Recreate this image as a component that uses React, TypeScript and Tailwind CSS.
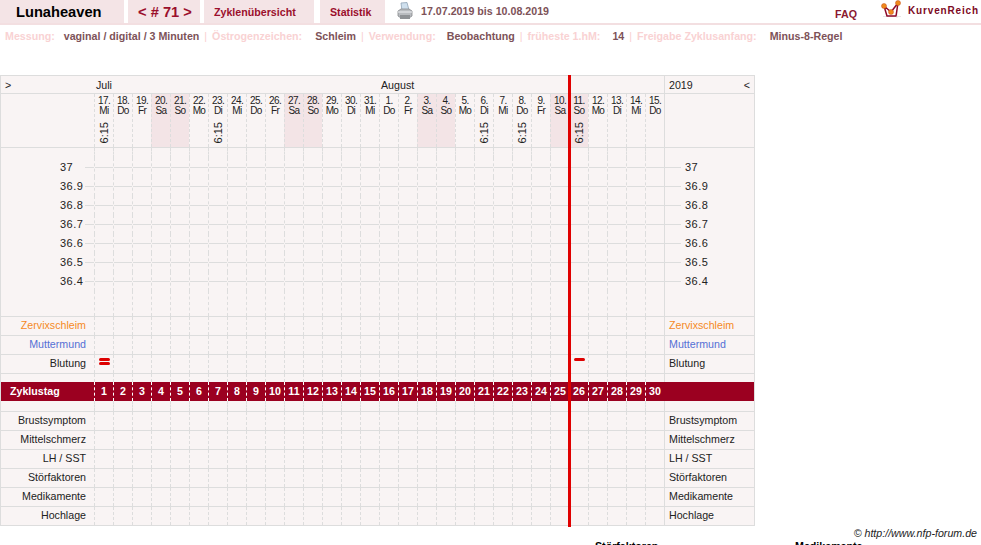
const days: [number, string][] = [
  [17, "Mi"], [18, "Do"], [19, "Fr"], [20, "Sa"], [21, "So"], [22, "Mo"], [23, "Di"], [24, "Mi"], [25, "Do"], [26, "Fr"],
  [27, "Sa"], [28, "So"], [29, "Mo"], [30, "Di"], [31, "Mi"], [1, "Do"], [2, "Fr"], [3, "Sa"], [4, "So"], [5, "Mo"],
  [6, "Di"], [7, "Mi"], [8, "Do"], [9, "Fr"], [10, "Sa"], [11, "So"], [12, "Mo"], [13, "Di"], [14, "Mi"], [15, "Do"],
];
const timed = [0, 6, 20, 22, 25];
const temps = ["37", "36.9", "36.8", "36.7", "36.6", "36.5", "36.4"];
const idx = days.map((_, i) => i);

function Cells({ line = false }: { line?: boolean }) {
  return (
    <div className="flex">
      {idx.map((i) => (
        <div key={i} className="w-[19px] flex items-center border-l border-dashed border-[#dddddd]">
          {line && <div className="h-px w-full bg-[#dddddd]" />}
        </div>
      ))}
    </div>
  );
}

function LabelRow({ label, color = "text-[#222222]", bleed = false }: { label: string; color?: string; bleed?: boolean }) {
  return (
    <div className="flex h-[19px] border-b border-[#dddddd]">
      <div className={`w-[93px] text-right pr-[8px] leading-[16px] ${color}`}>{label}</div>
      <div className="flex">
        {idx.map((i) => (
          <div key={i} className="w-[19px] flex flex-col items-center gap-px pt-[3px] border-l border-dashed border-[#dddddd]">
            {bleed && i === 0 && (
              <>
                <div className="h-[3px] w-[11px] rounded-full bg-[#dd0000]" />
                <div className="h-[3px] w-[11px] rounded-full bg-[#dd0000]" />
              </>
            )}
            {bleed && i === 25 && <div className="h-[3px] w-[11px] rounded-full bg-[#dd0000]" />}
          </div>
        ))}
      </div>
      <div className={`w-[90px] border-l border-[#dddddd] pl-[4px] leading-[16px] ${color}`}>{label}</div>
    </div>
  );
}

function Spacer({ h, border = false }: { h: string; border?: boolean }) {
  return (
    <div className={`flex ${h} ${border ? "border-b border-[#dddddd]" : ""}`}>
      <div className="w-[93px]" />
      <Cells />
      <div className="w-[90px] border-l border-[#dddddd]" />
    </div>
  );
}

function Printer() {
  return (
    <svg width="16" height="18" viewBox="0 0 16 18" className="ml-[12px]">
      <path d="M4 1 L10 0.5 L12 8 L5 9 Z" fill="#cfe0ee" stroke="#8fa3b5" strokeWidth="0.8" />
      <path d="M1 9 L4 7 H12 L15 9 V14 L12 16 H4 L1 14 Z" fill="#b9bcc0" stroke="#85888c" strokeWidth="0.8" />
      <path d="M1 10 H15" stroke="#e5e7e9" strokeWidth="1.2" />
      <path d="M3 13 H13 V17 H3 Z" fill="#8f9296" />
    </svg>
  );
}

function Logo() {
  return (
    <svg width="21" height="20" viewBox="0 0 21 20" className="shrink-0">
      <path d="M2 16.5 H20 M16 18 V6" stroke="#e6e6e6" strokeWidth="1" fill="none" />
      <path d="M3 6 L6 16 H15 L17 3 L10 12 Z" fill="#ffffff" stroke="#8d0a2a" strokeWidth="1.5" strokeLinejoin="round" />
      <circle cx="3" cy="6" r="2.5" fill="#f08a1c" stroke="#c4501c" strokeWidth="0.5" />
      <circle cx="17" cy="3" r="2.5" fill="#f08a1c" stroke="#c4501c" strokeWidth="0.5" />
      <circle cx="10" cy="12" r="2.5" fill="#f08a1c" stroke="#c4501c" strokeWidth="0.5" />
    </svg>
  );
}

function Info({ k, v, vml, sep = true }: { k: string; v: string; vml: string; sep?: boolean }) {
  return (
    <>
      {sep && <span className="ml-[5px] mr-[5px] text-[#f9cfd0] font-normal">|</span>}
      <span className="text-[#f9d2d3]">{k}</span>
      <span className={`${vml} text-[#7d5258]`}>{v}</span>
    </>
  );
}

export default function App() {
  return (
    <div className="relative w-[981px] h-[545px] overflow-hidden bg-white text-[10.67px] font-['Liberation_Sans',Arial,sans-serif]">
      {/* top bar */}
      <div className="flex items-stretch h-[25px] border-b-2 border-[#f3dfe1]">
        <div className="w-[124px] bg-[#f4e4e6] pl-[16px] text-[14.67px] font-bold text-black leading-[25px]">Lunaheaven</div>
        <div className="ml-[4px] w-[72px] bg-[#f4e4e6] pl-[2px] text-center text-[14.67px] font-bold text-[#9b0f2c] leading-[25px]">&lt; # 71 &gt;</div>
        <div className="ml-[4px] w-[110px] bg-[#f4e4e6] pl-[10px] font-bold text-[#9b0f2c] leading-[24px]">Zyklenübersicht</div>
        <div className="ml-[6px] w-[65px] bg-[#f4e4e6] pl-[10px] font-bold text-[#9b0f2c] leading-[24px]">Statistik</div>
        <div className="flex items-center pb-[2px]">
          <Printer />
          <span className="ml-[8px] font-bold text-[#7d5258]">17.07.2019 bis 10.08.2019</span>
        </div>
        <span className="ml-auto mr-[24px] mt-[6px] font-bold text-[#8b1a30]">FAQ</span>
        <div className="flex mr-[2px] pl-0">
          <Logo />
          <span className="ml-[6px] mt-[3px] text-[10px] font-bold tracking-[0.85px] text-[#7d0a25]">KurvenReich</span>
        </div>
      </div>

      {/* info line */}
      <div className="flex h-[50px] pt-[5px] pl-[5px] font-bold leading-[13px] whitespace-nowrap">
        <Info sep={false} k="Messung:" vml="ml-[9px]" v="vaginal / digital / 3 Minuten" />
        <Info k="Östrogenzeichen:" vml="ml-[13px]" v="Schleim" />
        <Info k="Verwendung:" vml="ml-[11px]" v="Beobachtung" />
        <Info k="früheste 1.hM:" vml="ml-[12px]" v="14" />
        <Info k="Freigabe Zyklusanfang:" vml="ml-[13px]" v="Minus-8-Regel" />
      </div>

      {/* chart table */}
      <div className="relative w-[755px] border-x border-t border-[#dddddd] bg-[#f9f4f4] text-[#222222]">
        <div className="flex h-[18px] border-b border-[#dddddd] leading-[19px]">
          <div className="w-[93px] pl-[4px]">&gt;</div>
          <div className="w-[287px] pl-[2px]">Juli</div>
          <div className="w-[283px]">August</div>
          <div className="w-[90px] border-l border-[#dddddd] pl-[4px] pr-[4px] flex justify-between">
            <span>2019</span>
            <span>&lt;</span>
          </div>
        </div>

        <div className="flex h-[54px] border-b border-[#dddddd]">
          <div className="w-[93px]" />
          <div className="flex">
            {days.map(([d, w], i) => (
              <div
                key={i}
                className={`w-[19px] border-l border-dashed border-[#dddddd] flex flex-col items-center pt-[2px] text-[10px] leading-[10px] tracking-[-0.6px] ${
                  w === "Sa" || w === "So" ? "bg-[#f3e4e6]" : ""
                }`}
              >
                <span>{d}.</span>
                <span>{w}</span>
                {timed.includes(i) && (
                  <span className="mt-[6px] [writing-mode:vertical-rl] rotate-180 text-[11px] leading-[12px] tracking-normal">6:15</span>
                )}
              </div>
            ))}
          </div>
          <div className="w-[90px] border-l border-[#dddddd]" />
        </div>

        <Spacer h="h-[10px]" />
        {temps.map((t) => (
          <div key={t} className="flex h-[19px] leading-[19px] text-[11px] tracking-[0.5px]">
            <div className="w-[93px] flex items-center">
              <span className="ml-[59px] w-[25px]">{t}</span>
              <div className="h-px flex-1 bg-[#dddddd]" />
            </div>
            <Cells line />
            <div className="w-[90px] border-l border-[#dddddd] flex items-center">
              <div className="h-px w-[16px] bg-[#dddddd]" />
              <span className="ml-[4px]">{t}</span>
            </div>
          </div>
        ))}
        <Spacer h="h-[26px]" border />

        <LabelRow label="Zervixschleim" color="text-[#f58a1f]" />
        <LabelRow label="Muttermund" color="text-[#5570d5]" />
        <LabelRow label="Blutung" bleed />
        <Spacer h="h-[8px]" />

        <div className="flex h-[19px] bg-[#9b0020] text-white font-bold leading-[18px]">
          <div className="w-[93px] pl-[9px]">Zyklustag</div>
          <div className="flex">
            {idx.map((i) => (
              <div key={i} className="w-[19px] text-center border-l border-dashed border-white">{i + 1}</div>
            ))}
          </div>
          <div className="w-[90px] border-l border-[#9b0020]" />
        </div>
        <Spacer h="h-[11px]" border />

        {["Brustsymptom", "Mittelschmerz", "LH / SST", "Störfaktoren", "Medikamente", "Hochlage"].map((l) => (
          <LabelRow key={l} label={l} />
        ))}

        <div className="absolute left-[567px] -top-px h-[452px] w-[3px] bg-[#e00000]" />
      </div>

      {/* footer */}
      <div className="pr-[4px] pt-[1px] text-right italic leading-[13px] text-[#222222]">© http://www.nfp-forum.de</div>
      <div className="flex font-bold text-black leading-[13px]">
        <span className="ml-[595px] w-[200px]">Störfaktoren</span>
        <span>Medikamente</span>
      </div>
    </div>
  );
}
